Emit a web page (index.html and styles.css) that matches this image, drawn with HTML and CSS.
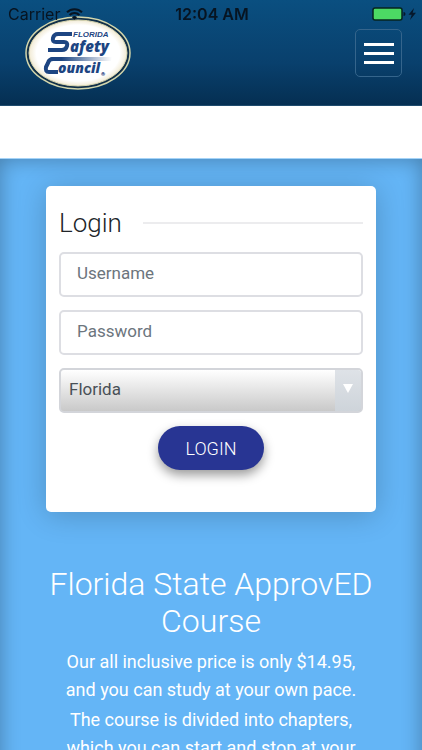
FILE: index.html
```
<!DOCTYPE html>
<html lang="en">
<head>
	<meta charset="utf-8">
	<meta name="viewport" content="width=device-width, initial-scale=1">
	<title>Florida Safety Council</title>
	<link rel="stylesheet" href="styles.css">
</head>
<body>

<div class="status">
	<div class="status-left">
		<span>Carrier</span>
		<svg width="17" height="12" viewBox="0 0 17 12" fill="none" stroke="#071421" stroke-width="2">
			<path d="M1 4.3a10.6 10.6 0 0 1 15 0M3.6 7a7 7 0 0 1 9.8 0"/>
			<path d="M8.500 11.800 5.900 9.200a3.700 3.700 0 0 1 5.200 0z" fill="#071421" stroke="none"/>
		</svg>
	</div>
	<span class="time">12:04 AM</span>
	<div class="status-right">
		<svg width="44" height="14" viewBox="0 0 44 14">
			<rect x="1" y="1" width="29" height="12" rx="2" fill="#4cd964" stroke="#06251f" stroke-width="1.500"/>
			<path d="M31.500 5q2 0 2 2t-2 2z" fill="#06182b"/>
			<path d="M42 1 36.500 7.700h3.200L38 13l6-7.200h-3.300z" fill="#06182b"/>
		</svg>
	</div>
</div>

<header class="navbar">
	<a href="#" class="brand" aria-label="Florida Safety Council">
		<svg width="106" height="74" viewBox="0 0 106 74">
			<defs>
				<radialGradient id="oval">
					<stop offset=".85" stop-color="#fff"/>
					<stop offset="1" stop-color="#f1ead4"/>
				</radialGradient>
				<linearGradient id="swoosh">
					<stop offset=".2" stop-color="#1d4582"/>
					<stop offset="1" stop-color="#fff"/>
				</linearGradient>
			</defs>
			<ellipse cx="53" cy="37" rx="52" ry="36" fill="#123049" stroke="#d3d6ac" stroke-width="1.500"/>
			<ellipse cx="53" cy="37" rx="49" ry="33" fill="url(#oval)" stroke="#d8d6b0"/>
			<path d="M27 41h60l-1 4H24q0-3 3-4z" fill="url(#swoosh)"/>
			<g class="logo-text">
				<text x="48" y="21" class="small">FLORIDA</text>
				<text x="45" y="36">afety</text>
				<text x="33" y="57" class="council">ouncil</text>
				<text x="76" y="60" class="mark">®</text>
			</g>
			<g fill="none" stroke="#1d4582" stroke-width="4">
				<path d="M47 18H33q-4 0-5 4-1 4 3 4h8q4 0 3 4-1 4-5 4H23"/>
				<path d="M36 43h-8q-4 0-5 4l-2 4q-1 5 3 5h9"/>
			</g>
		</svg>
	</a>
	<button type="button" class="toggler" aria-label="Toggle navigation">
		<span></span><span></span><span></span>
	</button>
</header>

<main class="content">
	<form class="card">
		<h3 class="card-title">Login</h3>
		<input type="text" class="field" placeholder="Username" aria-label="Username">
		<input type="password" class="field" placeholder="Password" aria-label="Password">
		<div class="select-wrap">
			<select class="field" aria-label="State">
				<option>Florida</option>
			</select>
			<span class="arrow"></span>
		</div>
		<button type="submit" class="btn">LOGIN</button>
	</form>

	<section class="intro">
		<h1>Florida State ApprovED Course</h1>
		<p>Our all inclusive price is only $14.95, and you can study at your own pace.</p>
		<p>The course is divided into chapters, which you can start and stop at your</p>
	</section>
</main>

</body>
</html>
```
FILE: styles.css
```
* {
	box-sizing: border-box;
}

body {
	margin: 0;
	font-family: Roboto, "Liberation Sans", sans-serif;
	font-size: 18px;
	color: #212529;
	background: #fff;
}

/* Status bar */
.status {
	position: fixed;
	top: 0;
	left: 0;
	right: 0;
	z-index: 2;
	display: grid;
	grid-template-columns: 1fr auto 1fr;
	align-items: center;
	height: 28px;
	padding: 0 6px 0 8px;
	font-family: Inter, "Liberation Sans", sans-serif;
	font-size: 16px;
	color: #071421;
}

.status-left {
	display: flex;
	align-items: center;
	gap: 6px;
}

.status-right {
	display: flex;
	justify-content: flex-end;
}

.time {
	font-weight: 600;
}

/* Header */
.navbar {
	display: flex;
	justify-content: space-between;
	align-items: flex-start;
	height: 106px;
	padding: 16px 20px 0 25px;
	background: linear-gradient(#0a4f80, #09406d 60%, #052f52);
	border-bottom: 1px solid #1f4c6e;
}

.brand svg {
	display: block;
}

.logo-text {
	font-family: "Open Sans", "Liberation Sans", sans-serif;
	font-size: 15px;
	font-style: italic;
	font-weight: 800;
	fill: #1d4582;
}

.logo-text .small {
	font-family: "Liberation Sans", sans-serif;
	font-size: 8px;
}

.logo-text .council {
	font-size: 14px;
}

.logo-text .mark {
	font-size: 5px;
}

.toggler {
	display: flex;
	flex-direction: column;
	align-items: center;
	justify-content: center;
	gap: 6px;
	width: 47px;
	height: 48px;
	margin-top: 13px;
	padding: 0;
	background: none;
	border: 1px solid #35658c;
	border-radius: 5px;
	cursor: pointer;
}

.toggler span {
	width: 30px;
	height: 3px;
	background: #fff;
}

/* Content */
.content {
	margin-top: 52px;
	padding: 27px 46px;
	background: #64b5f6;
	border-top: 1px solid #a5d3f7;
	box-shadow: inset 0 0 20px rgba(0, 0, 0, .3);
}

.card {
	padding: 20px 13px 42px;
	background: #fff;
	border-radius: 5px;
	box-shadow: 0 3px 30px rgba(0, 0, 0, .2);
}

.card-title {
	display: flex;
	align-items: center;
	gap: 21px;
	margin: 0 0 12px;
	font-size: 26px;
	font-weight: 300;
	line-height: 34px;
}

.card-title::after {
	content: "";
	flex: 1;
	height: 2px;
	background: #ececee;
}

.field {
	display: block;
	width: 100%;
	height: 45px;
	margin: 0 0 13px;
	padding: 0 16px 4px;
	font-family: inherit;
	font-size: 17px;
	color: #495057;
	background: #fff;
	border: 2px solid #dddee3;
	border-radius: 5px;
	outline: 0;
}

.field::placeholder {
	color: #6c757d;
	opacity: 1;
}

.field:focus {
	border-color: #64b5f6;
}

.select-wrap {
	position: relative;
}

select.field {
	padding: 0 36px 4px 8px;
	appearance: none;
	background: linear-gradient(#fff, #c9c9c9);
	border-color: #d3d5da;
}

/* drop-down marker drawn over the native select */
.arrow {
	position: absolute;
	top: 2px;
	right: 2px;
	bottom: 2px;
	display: flex;
	justify-content: center;
	width: 26px;
	padding-top: 14px;
	background: linear-gradient(#dee2e7, #ced4da);
	border-radius: 0 3px 3px 0;
	pointer-events: none;
}

.arrow::before {
	content: "";
	width: 10px;
	height: 9px;
	background: #fff;
	clip-path: polygon(0 0, 100% 0, 50% 100%);
}

.btn {
	display: block;
	height: 44px;
	margin: 0 auto;
	padding: 0 27px;
	font-family: inherit;
	font-size: 18px;
	font-weight: 300;
	color: #fff;
	background: #283593;
	border: 0;
	border-radius: 22px;
	box-shadow: 0 5px 11px rgba(0, 0, 0, .4);
	cursor: pointer;
}

/* Intro */
.intro {
	padding-top: 54px;
	text-align: center;
	color: #fff;
}

.intro h1 {
	margin: 0 0 8px;
	font-size: 32px;
	font-weight: 300;
	line-height: 37px;
}

.intro p {
	margin: 0 0 2px;
	padding: 0 12px;
	line-height: 28px;
}
```
